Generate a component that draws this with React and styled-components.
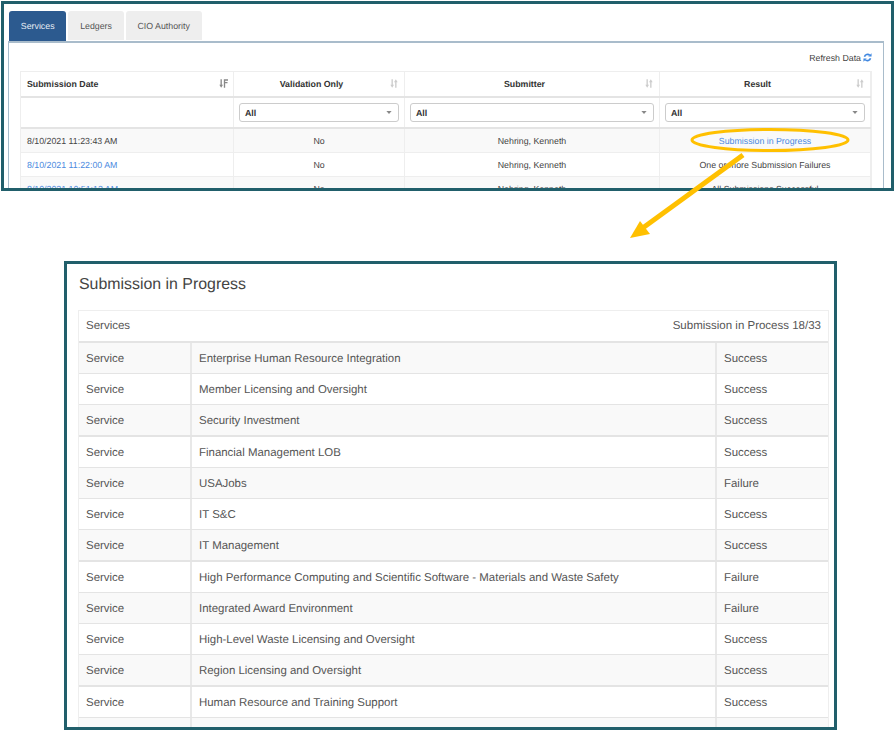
import styled, { createGlobalStyle } from "styled-components";

const services = [
	["Enterprise Human Resource Integration", "Success"],
	["Member Licensing and Oversight", "Success"],
	["Security Investment", "Success"],
	["Financial Management LOB", "Success", true],
	["USAJobs", "Failure"],
	["IT S&C", "Success"],
	["IT Management", "Success"],
	["High Performance Computing and Scientific Software - Materials and Waste Safety", "Failure", true],
	["Integrated Award Environment", "Failure"],
	["High-Level Waste Licensing and Oversight", "Success"],
	["Region Licensing and Oversight", "Success"],
	["Human Resource and Training Support", "Success", true],
	["", ""],
];

const SortIcon = ({ active }) => (
	<SortSvg viewBox="0 0 12 10" $active={active}>
		<path d="M3 0h1.6v6.5H6L3.8 10 1.6 6.5H3z" />
		{active ? (
			<path d="M7 0h5v1.6H8.6v1.6H11.4v1.6H8.6V10H7z" />
		) : (
			<path d="M9 10H7.4V3.5H6L8.2 0l2.2 3.5H9z" />
		)}
	</SortSvg>
);

const Caret = () => (
	<CaretSvg viewBox="0 0 7 4">
		<path d="M0 0h7L3.5 4z" />
	</CaretSvg>
);

const RefreshIcon = () => (
	<RefreshSvg viewBox="0 0 12 12">
		<path d="M2 5a4.2 4.2 0 0 1 7-2" />
		<path d="M10 7a4.2 4.2 0 0 1-7 2" />
		<path className="tip" d="M11.4 .4v4.4H7z M.6 11.6V7.2H5z" />
	</RefreshSvg>
);

const App = () => {
	return (
		<Page>
			<GlobalStyle />
			<TopFrame>
				<Tabs>
					<Tab $active>Services</Tab>
					<Tab>Ledgers</Tab>
					<Tab>CIO Authority</Tab>
				</Tabs>
				<TabPanel>
					<Refresh>
						Refresh Data <RefreshIcon />
					</Refresh>
					<GridTable>
						<HeadRow>
							<HeadCell $left>
								Submission Date
								<SortIcon active />
							</HeadCell>
							<HeadCell>
								Validation Only
								<SortIcon />
							</HeadCell>
							<HeadCell>
								Submitter
								<SortIcon />
							</HeadCell>
							<HeadCell>
								Result
								<SortIcon />
							</HeadCell>
						</HeadRow>
						<FilterRow>
							<FilterCell />
							<FilterCell>
								<Select>
									All
									<Caret />
								</Select>
							</FilterCell>
							<FilterCell>
								<Select>
									All
									<Caret />
								</Select>
							</FilterCell>
							<FilterCell>
								<Select>
									All
									<Caret />
								</Select>
							</FilterCell>
						</FilterRow>
						<DataRow $striped>
							<DataCell $left>8/10/2021 11:23:43 AM</DataCell>
							<DataCell>No</DataCell>
							<DataCell>Nehring, Kenneth</DataCell>
							<DataCell>
								<Link>Submission in Progress</Link>
							</DataCell>
						</DataRow>
						<DataRow>
							<DataCell $left>
								<Link>8/10/2021 11:22:00 AM</Link>
							</DataCell>
							<DataCell>No</DataCell>
							<DataCell>Nehring, Kenneth</DataCell>
							<DataCell>One or more Submission Failures</DataCell>
						</DataRow>
						<DataRow $striped>
							<DataCell $left>
								<Link>8/10/2021 10:51:12 AM</Link>
							</DataCell>
							<DataCell>No</DataCell>
							<DataCell>Nehring, Kenneth</DataCell>
							<DataCell>All Submissions Successful</DataCell>
						</DataRow>
					</GridTable>
				</TabPanel>
			</TopFrame>
			<BottomFrame>
				<Title>Submission in Progress</Title>
				<ListPanel>
					<ListHeading>
						<span>Services</span>
						<span>Submission in Process 18/33</span>
					</ListHeading>
					{services.map(([name, result, tall], i) => (
						<ListRow key={i} $striped={i % 2 === 0} $tall={tall}>
							<ListCell>{name ? "Service" : ""}</ListCell>
							<ListCell>{name}</ListCell>
							<ListCell>{result}</ListCell>
						</ListRow>
					))}
				</ListPanel>
			</BottomFrame>
			<Callout viewBox="0 0 895 730">
				<ellipse cx="770" cy="140" rx="78" ry="10.5" fill="none" stroke="#ffc000" strokeWidth="3" />
				<path d="M743 155L640 230" fill="none" stroke="#ffc000" strokeWidth="5" />
				<path d="M630 238l20-4-10-13z" fill="#ffc000" />
			</Callout>
		</Page>
	);
};

const GlobalStyle = createGlobalStyle`
	html, body {
		margin: 0;
		background: #fff;
	}
	* {
		box-sizing: border-box;
	}
`;
const Page = styled.div`
	position: relative;
	width: 895px;
	height: 730px;
	padding-top: 1px;
	overflow: hidden;
	font-family: "Liberation Sans", Arial, sans-serif;
	color: #333;
	text-rendering: geometricPrecision;
`;
const TopFrame = styled.section`
	width: 893px;
	height: 190px;
	margin-left: 1px;
	padding: 7px 0 0 4px;
	border: 3px solid #215f6b;
	overflow: hidden;
`;
const Tabs = styled.div`
	display: flex;
	gap: 2px;
	margin-left: 1px;
	height: 30px;
`;
const Tab = styled.div`
	display: flex;
	align-items: center;
	padding: 0 11.8px;
	font-size: 8.8px;
	border-radius: 3px 3px 0 0;
	background: ${(p) => (p.$active ? "#2c5a8f" : "#eeeeee")};
	color: ${(p) => (p.$active ? "#e8eef5" : "#555")};
	height: ${(p) => (p.$active ? "30px" : "29px")};
`;
const TabPanel = styled.div`
	width: 876px;
	height: 160px;
	padding: 7px 11px 0;
	border: 1px solid #a9bccb;
	border-top-width: 2px;
	border-bottom: 0;
`;
const Refresh = styled.div`
	display: flex;
	justify-content: flex-end;
	align-items: center;
	gap: 2px;
	height: 15px;
	margin-bottom: 6px;
	font-size: 8.8px;
	color: #444;
`;
const RefreshSvg = styled.svg`
	width: 9px;
	height: 9px;
	fill: none;
	stroke: #3f87e0;
	stroke-width: 2.2;
	.tip {
		fill: #3f87e0;
		stroke: none;
	}
`;
const GridTable = styled.div`
	width: 852px;
	border: 1px solid #eee;
	border-bottom: 0;
`;
const columns = "213px 171px 255px 1fr";
const HeadRow = styled.div`
	display: grid;
	grid-template-columns: ${columns};
	height: 26px;
	border-bottom: 2px solid #e4e4e4;
`;
const HeadCell = styled.div`
	position: relative;
	display: flex;
	align-items: center;
	justify-content: ${(p) => (p.$left ? "flex-start" : "center")};
	padding: ${(p) => (p.$left ? "0 0 0 6px" : "0 15px 0 0")};
	font-size: 8.8px;
	font-weight: 700;
	color: #333;
	border-right: 1px solid #eee;
`;
const SortSvg = styled.svg`
	position: absolute;
	right: 5px;
	top: 7px;
	width: 10px;
	height: 9px;
	fill: ${(p) => (p.$active ? "#888" : "#ccc")};
`;
const FilterRow = styled.div`
	display: grid;
	grid-template-columns: ${columns};
	height: 31px;
	border-bottom: 2px solid #e4e4e4;
`;
const FilterCell = styled.div`
	display: flex;
	align-items: center;
	padding: 0 5px;
	border-right: 1px solid #eee;
`;
const Select = styled.div`
	display: flex;
	align-items: center;
	justify-content: space-between;
	width: 100%;
	height: 19px;
	padding: 0 6px 0 5px;
	font-size: 8.8px;
	font-weight: 700;
	color: #333;
	background: #fff;
	border: 1px solid #ccc;
	border-radius: 3px;
`;
const CaretSvg = styled.svg`
	width: 6px;
	height: 3px;
	fill: #888;
`;
const DataRow = styled.div`
	display: grid;
	grid-template-columns: ${columns};
	height: 24px;
	background: ${(p) => (p.$striped ? "#f9f9f9" : "#fff")};
	border-bottom: 1px solid #eee;
`;
const DataCell = styled.div`
	display: flex;
	align-items: center;
	justify-content: ${(p) => (p.$left ? "flex-start" : "center")};
	padding-left: ${(p) => (p.$left ? "6px" : "0")};
	font-size: 8.8px;
	color: #444;
	border-right: 1px solid #eee;
`;
const Link = styled.span`
	color: #4a8ae0;
`;
const BottomFrame = styled.section`
	width: 773px;
	height: 469px;
	margin: 70px 0 0 64px;
	padding: 0 5px 0 11px;
	border: 3px solid #215f6b;
	overflow: hidden;
`;
const Title = styled.h2`
	margin: 0;
	height: 46px;
	padding: 11px 0 0 1px;
	font-size: 15.9px;
	line-height: 20px;
	font-weight: 400;
	color: #444;
`;
const ListPanel = styled.div`
	width: 751px;
	border: 1px solid #eee;
	border-bottom: 0;
`;
const ListHeading = styled.div`
	display: flex;
	align-items: center;
	justify-content: space-between;
	height: 32px;
	padding: 0 7px;
	font-size: 11.5px;
	color: #555;
	border-bottom: 2px solid #e4e4e4;
`;
const ListRow = styled.div`
	display: grid;
	grid-template-columns: 113px 525px 1fr;
	height: ${(p) => (p.$tall ? "32px" : "31px")};
	background: ${(p) => (p.$striped ? "#f9f9f9" : "#fff")};
	border-bottom: 1px solid #e4e4e4;
	border-top: ${(p) => (p.$tall ? "1px solid #e4e4e4" : "0")};
`;
const ListCell = styled.div`
	display: flex;
	align-items: center;
	padding: 1px 0 0 7px;
	font-size: 11.45px;
	color: #555;
	border-right: 2px solid #e8e8e8;
	&:last-child {
		border-right: 0;
	}
`;
const Callout = styled.svg`
	position: absolute;
	left: 0;
	top: 0;
	width: 895px;
	height: 730px;
	pointer-events: none;
`;

export default App;
